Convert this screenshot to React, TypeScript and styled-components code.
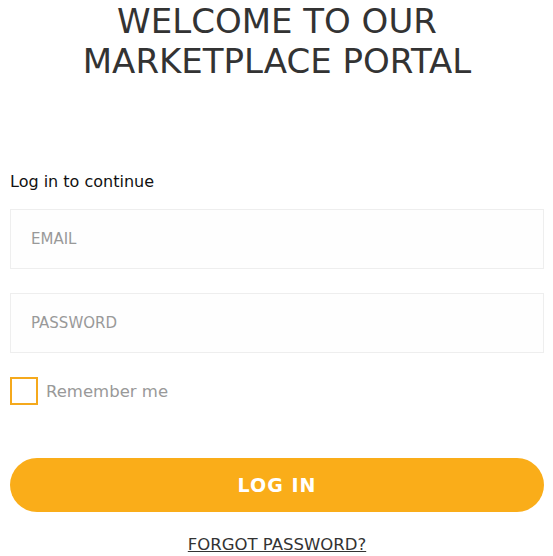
import React from "react";
import styled, { createGlobalStyle } from "styled-components";

const Global = createGlobalStyle`
  html, body { margin: 0; padding: 0; background: #fff; }
  body { font-family: "DejaVu Sans", "Open Sans", sans-serif; color: #333; }
  * { box-sizing: border-box; }
`;

const Page = styled.div`
  width: 553px;
  padding: 0 9px 0 10px;
  display: flex;
  flex-direction: column;
`;

const Title = styled.h1`
  margin: 0;
  padding-top: 1px;
  text-align: center;
  font-weight: 400;
  font-size: 34px;
  line-height: 40px;
  color: #333;
  letter-spacing: 0;
`;

const Form = styled.form`
  display: flex;
  flex-direction: column;
  margin-top: 91px;
`;

const Subtitle = styled.p`
  margin: 0 0 17px;
  font-size: 16px;
  line-height: 20px;
  color: #111;
`;

const Field = styled.input`
  width: 100%;
  height: 60px;
  border: 1px solid #eeeeee;
  background: #fefefe;
  padding: 0 20px;
  font-family: inherit;
  font-size: 15px;
  color: #333;
  margin-bottom: 24px;
  outline: none;
  &::placeholder { color: #999; }
`;

const CheckRow = styled.label`
  display: flex;
  align-items: center;
  gap: 8px;
  font-size: 16.5px;
  color: #999;
  height: 28px;
`;

const Box = styled.span`
  width: 28px;
  height: 28px;
  border: 2px solid #f5a91c;
  display: inline-block;
`;

const Button = styled.button`
  margin-top: 53px;
  height: 54px;
  border: none;
  border-radius: 27px;
  background: #faad19;
  color: #fff;
  font-family: inherit;
  font-weight: 700;
  font-size: 19px;
  letter-spacing: 1px;
  cursor: pointer;
`;

const Forgot = styled.a`
  align-self: center;
  margin-top: 23px;
  font-size: 16.5px;
  line-height: 20px;
  color: #333;
  text-decoration: underline;
`;

export default function App() {
  return (
    <>
      <Global />
      <Page>
        <Title>
          WELCOME TO OUR
          <br />
          MARKETPLACE PORTAL
        </Title>
        <Form onSubmit={(e) => e.preventDefault()}>
          <Subtitle>Log in to continue</Subtitle>
          <Field type="email" placeholder="EMAIL" />
          <Field type="password" placeholder="PASSWORD" />
          <CheckRow>
            <Box />
            Remember me
          </CheckRow>
          <Button type="submit">LOG IN</Button>
          <Forgot href="#">FORGOT PASSWORD?</Forgot>
        </Form>
      </Page>
    </>
  );
}
